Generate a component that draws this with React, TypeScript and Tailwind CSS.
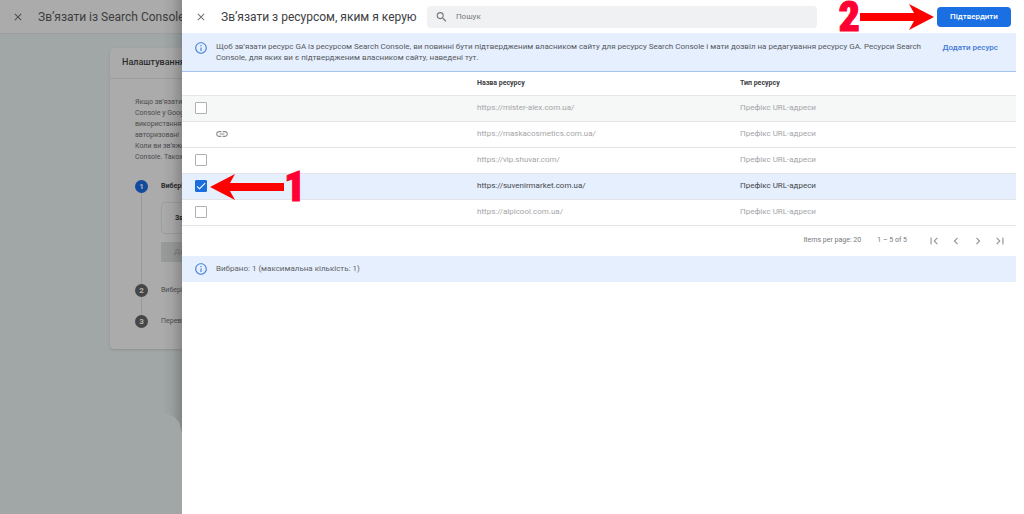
import React, { useState } from "react";
import { MdCheck, MdClose, MdFirstPage, MdChevronLeft, MdChevronRight, MdInfoOutline, MdLastPage, MdLink, MdSearch } from "react-icons/md";

type Resource = { url: string; linked?: boolean };

const resources: Resource[] = [
  { url: "https://mister-alex.com.ua/" },
  { url: "https://maskacosmetics.com.ua/", linked: true },
  { url: "https://vip.shuvar.com/" },
  { url: "https://suvenirmarket.com.ua/" },
  { url: "https://alpicool.com.ua/" },
];

const introLines = [
  "Якщо зв’язати",
  "Console у Google",
  "використання",
  "авторизовані",
  "Коли ви зв’яжете",
  "Console. Також",
];

function StepBadge({ n, active }: { n: number; active?: boolean }) {
  return (
    <span
      className={
        "flex size-[13px] shrink-0 items-center justify-center rounded-full text-[8px] font-bold text-[#b5b5b5] " +
        (active ? "bg-[#124a9e]" : "bg-[#454647]")
      }
    >
      {n}
    </span>
  );
}

function BackgroundPage() {
  return (
    <div className="min-h-screen overflow-hidden bg-[#a1a6a6] pb-6 text-[#4b4c4e]">
      <header className="flex h-[34px] items-center border-b border-[#9da0a0] bg-[#ababab]">
        <button aria-label="Закрити сторінку" className="ml-3 mr-[14px]">
          <MdClose className="size-3" />
        </button>
        <h1 className="whitespace-nowrap text-[12px] text-[#3c3d3f]">Зв’язати із Search Console</h1>
      </header>
      <section className="ml-[110px] mr-[110px] mt-[14px] rounded-sm bg-[#ababab] shadow-sm">
        <h2 className="flex h-[31px] items-center border-b border-[#9c9e9e] px-3 text-[9px] font-medium text-[#2b2c2e]">
          Налаштування
        </h2>
        <div className="px-[25px] pb-[21px] pt-[18px]">
          <p className="text-[7px] leading-[11px]">
            {introLines.map((line) => (
              <span key={line} className="block whitespace-nowrap">{line}</span>
            ))}
          </p>
          <ol className="mt-[17px] text-[7px]">
            <li className="flex gap-[13px]">
              <div className="flex flex-col items-center">
                <StepBadge n={1} active />
                <span className="w-px grow bg-[#989a9a]" />
              </div>
              <div className="h-[104px] grow">
                <h3 className="flex h-[13px] items-center font-bold text-[#2b2c2e]">Виберіть</h3>
                <div className="mt-[9px] flex h-8 items-center rounded-sm border border-[#9c9e9e] px-[13px] font-bold text-[#2b2c2e]">
                  Зв’язати
                </div>
                <button className="mt-2 h-5 w-14 bg-[#999a9a] px-[13px] text-left text-[8px] text-[#777979]">Далі</button>
              </div>
            </li>
            <li className="flex gap-[13px]">
              <div className="flex flex-col items-center">
                <StepBadge n={2} />
                <span className="h-[18px] w-px bg-[#989a9a]" />
              </div>
              <span className="leading-[13px]">Виберіть</span>
            </li>
            <li className="flex gap-[13px]">
              <StepBadge n={3} />
              <span className="leading-[13px]">Перевірте</span>
            </li>
          </ol>
        </div>
      </section>
    </div>
  );
}

function Annotation({ label, arrow }: { label: string; arrow: "left" | "right" }) {
  const shape = (
    <svg
      viewBox="0 0 74 26"
      className={"h-[26px] w-[74px] " + (arrow === "right" ? "rotate-180" : "")}
      aria-hidden="true"
    >
      <path d="M0 13 25 0 20 9H74V17H20L25 26Z" fill="#ff0000" />
    </svg>
  );
  return (
    <div className="pointer-events-none flex items-center">
      {arrow === "left" && shape}
      <span className="font-['Impact','Roboto_Condensed','Open_Sans_Condensed','Noto_Sans_Condensed','DejaVu_Sans_Condensed',sans-serif] text-[42px] font-black leading-[34px] text-[#ff0033] [-webkit-text-stroke:1px_#ff0033]">
        {label}
      </span>
      {arrow === "right" && shape}
    </div>
  );
}

function ResourceTable() {
  const [selected, setSelected] = useState(3);
  return (
    <table className="w-full table-fixed border-collapse text-left text-[8px]">
      <colgroup>
        <col className="w-[33px]" />
        <col className="w-[262px]" />
        <col className="w-[263px]" />
        <col />
      </colgroup>
      <thead>
        <tr className="h-[23px] border-b border-[#e6e7e8] text-[7px] text-[#3c4043]">
          <th aria-label="Вибір" />
          <th aria-label="Зв’язок" />
          <th className="font-bold">Назва ресурсу</th>
          <th className="font-bold">Тип ресурсу</th>
        </tr>
      </thead>
      <tbody>
        {resources.map((r, i) => {
          const on = i === selected;
          return (
            <tr
              key={r.url}
              className={
                "h-[26px] border-b border-[#e3e4e6] " +
                (on ? "bg-[#e6effd] text-[#44474b]" : i === 0 ? "bg-[#f6f7f7] text-[#a4a5a7]" : "text-[#a4a5a7]")
              }
            >
              <td className="pl-[13px]">
                {!r.linked && (
                  <label className="relative block size-3">
                    <input
                      type="checkbox"
                      checked={on}
                      onChange={() => setSelected(on ? -1 : i)}
                      aria-label={r.url}
                      className="block size-3 appearance-none rounded-[1px] border border-[#aeb0b2] bg-white checked:border-[#1b6fdc] checked:bg-[#1b6fdc]"
                    />
                    {on && <MdCheck className="pointer-events-none absolute inset-0 size-3 text-white" />}
                  </label>
                )}
              </td>
              <td>{r.linked && <MdLink className="size-[14px] text-[#8b8d90]" />}</td>
              <td>{r.url}</td>
              <td>Префікс URL-адреси</td>
            </tr>
          );
        })}
      </tbody>
    </table>
  );
}

function Drawer() {
  return (
    <aside className="absolute inset-y-0 left-[182px] right-0 bg-white pr-2">
      <div className="pointer-events-none absolute right-full top-0 h-[433px] w-5 bg-linear-to-l from-black/20 via-black/5 to-transparent [clip-path:polygon(0_0,100%_0,100%_100%,85%_422px,60%_417px,0_412px)]" />
      <header className="flex h-[33px] items-center">
        <button aria-label="Закрити" className="ml-[13px] text-[#717376]">
          <MdClose className="size-3" />
        </button>
        <h2 className="ml-[14px] whitespace-nowrap text-[12px] text-[#3c4043]">Зв’язати з ресурсом, яким я керую</h2>
        <label className="ml-[10px] flex h-[22px] grow items-center rounded-sm bg-[#f0f1f2] px-2">
          <MdSearch className="size-[14px] text-[#777a7d]" />
          <input
            aria-label="Пошук"
            placeholder="Пошук"
            className="ml-2 w-full bg-transparent text-[8px] outline-none placeholder:text-[#77797c]"
          />
        </label>
        <button className="ml-[120px] mr-[5px] h-[20px] w-[74px] shrink-0 rounded-sm bg-[#1a6fe3] text-[8px] font-medium text-white">
          Підтвердити
        </button>
      </header>
      <div className="flex h-[39px] items-start border-b border-[#a3c3f3] bg-[#e6effd] pt-2">
        <MdInfoOutline className="ml-3 size-[14px] shrink-0 text-[#4b82db]" />
        <p className="ml-2 w-[712px] text-[8px] leading-[11px] text-[#55595e]">
          Щоб зв’язати ресурс GA із ресурсом Search Console, ви повинні бути підтвердженим власником сайту для ресурсу
          Search Console і мати дозвіл на редагування ресурсу GA. Ресурси Search Console, для яких ви є підтвердженим
          власником сайту, наведені тут.
        </p>
        <a href="#add" className="ml-auto mr-[18px] whitespace-nowrap text-[8px] font-medium leading-[13px] text-[#3f78d6]">
          Додати ресурс
        </a>
      </div>
      <ResourceTable />
      <nav aria-label="Сторінки" className="flex h-[30px] items-center justify-end pr-[9px] text-[7px] text-[#77797c]">
        <span>Items per page: 20</span>
        <span className="ml-4">1 – 5 of 5</span>
        <div className="ml-5 flex gap-2 text-[#94969a]">
          <button aria-label="Перша сторінка"><MdFirstPage className="size-[14px]" /></button>
          <button aria-label="Попередня сторінка"><MdChevronLeft className="size-[14px]" /></button>
          <button aria-label="Наступна сторінка"><MdChevronRight className="size-[14px]" /></button>
          <button aria-label="Остання сторінка"><MdLastPage className="size-[14px]" /></button>
        </div>
      </nav>
      <div className="flex h-[26px] items-center bg-[#e6effd] text-[8px] text-[#5f6368]">
        <MdInfoOutline className="ml-3 mr-2 size-[14px] text-[#4b82db]" />
        Вибрано: 1 (максимальна кількість: 1)
      </div>
      <div className="absolute left-7 top-[170px]">
        <Annotation label="1" arrow="left" />
      </div>
      <div className="absolute right-[90px] top-0">
        <Annotation label="2" arrow="right" />
      </div>
    </aside>
  );
}

export default function App() {
  return (
    <main className="relative min-h-screen overflow-hidden font-['Roboto','Liberation_Sans',sans-serif]">
      <BackgroundPage />
      <Drawer />
    </main>
  );
}
